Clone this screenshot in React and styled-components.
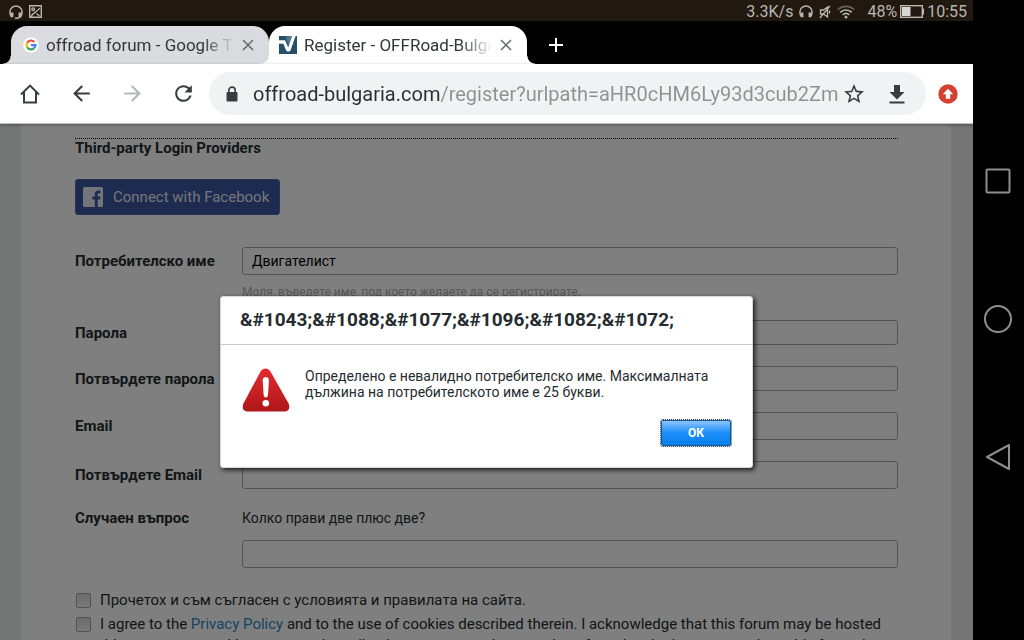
import React from 'react';
import styled, { createGlobalStyle, css } from 'styled-components';
import { MdArrowBack, MdArrowForward, MdRefresh, MdStarBorder } from 'react-icons/md';

const GlobalStyle = createGlobalStyle`
  *, *::before, *::after { box-sizing: border-box; }
  body { margin: 0; background: #000; }
  body, input, button { font-family: Roboto, "Noto Sans", sans-serif; }
`;

/* ---------- device ---------- */
const Device = styled.div`
  display: flex;
  height: 100vh;
  overflow: hidden;
  background: #000;
`;
const Screen = styled.div`
  flex: 1;
  min-width: 0;
  display: flex;
  flex-direction: column;
`;
const SystemNav = styled.nav`
  width: 51px;
  display: flex;
  flex-direction: column;
  align-items: center;
  justify-content: center;
  gap: 106px;
  padding: 0 1px 3px 0;
`;
const NavButton = styled.button`
  display: block;
  width: 32px;
  height: 32px;
  padding: 0;
  border: 0;
  background: none;
  svg { display: block; }
`;

/* ---------- status bar ---------- */
const StatusBar = styled.div`
  height: 21px;
  flex: none;
  display: flex;
  align-items: center;
  justify-content: space-between;
  padding: 2px 6px 0 9px;
  background: #21180f;
  color: #b9b5b1;
  font-size: 16px;
  line-height: 19px;
`;
const StatusGroup = styled.div`
  display: flex;
  align-items: center;
  gap: ${(p) => p.$gap}px;
  svg { display: block; }
`;
const Power = styled(StatusGroup)`
  margin-left: 6px;
`;

/* ---------- tabs ---------- */
const TabStrip = styled.div`
  flex: none;
  height: 43px;
  display: flex;
  align-items: flex-end;
  padding-left: 11px;
`;
const flare = css`
  content: "";
  position: absolute;
  bottom: 0;
  width: 8px;
  height: 8px;
`;
const Tab = styled.div`
  position: relative;
  width: 258px;
  height: 38px;
  display: flex;
  align-items: center;
  gap: 7px;
  padding: 0 14px 0 10px;
  border-radius: 16px 16px 0 0;
  background: ${(p) => (p.$active ? '#fff' : '#dadbdf')};
  color: #333639;
  &::before {
    ${flare}
    left: -8px;
    background: radial-gradient(circle at 0 0, transparent 7px, ${(p) => (p.$active ? '#fff' : '#dadbdf')} 8px);
  }
  &::after {
    ${flare}
    right: -8px;
    background: radial-gradient(circle at 100% 0, transparent 7px, ${(p) => (p.$active ? '#fff' : 'transparent')} 8px);
  }
  & > svg { flex: none; }
`;
const TabTitle = styled.span`
  flex: 1;
  min-width: 0;
  overflow: hidden;
  white-space: nowrap;
  font-size: 17px;
  line-height: 24px;
  mask-image: linear-gradient(to right, #000 calc(100% - 32px), transparent);
`;
const IconButton = styled.button`
  flex: none;
  display: flex;
  align-items: center;
  justify-content: center;
  width: 24px;
  height: 24px;
  padding: 0;
  border: 0;
  background: none;
  color: ${(p) => p.$color || '#3a3d40'};
  svg { display: block; flex: none; }
`;
const NewTab = styled(IconButton)`
  margin: 0 0 7px 17px;
`;
const CloseButton = styled(IconButton)`
  width: 14px;
`;

/* ---------- toolbar ---------- */
const Toolbar = styled.div`
  position: relative;
  z-index: 2;
  flex: none;
  height: 60px;
  display: flex;
  align-items: center;
  padding: 0 13px 0 18px;
  gap: 27px;
  background: #fff;
  border-bottom: 1px solid #c4c4c4;
  box-shadow: 0 1px 3px rgba(0, 0, 0, 0.35);
`;
const Omnibox = styled.div`
  flex: 1;
  min-width: 0;
  height: 43px;
  display: flex;
  align-items: center;
  gap: 13px;
  margin: 0 -17px 0 -13px;
  padding: 0 17px 0 15px;
  border-radius: 22px;
  background: #f1f2f4;
  color: #3a3d40;
  & > svg { flex: none; }
`;
const Address = styled.input`
  flex: 1;
  min-width: 0;
  padding: 0;
  border: 0;
  outline: 0;
  font-size: 20px;
  line-height: 28px;
  color: transparent;
  background: linear-gradient(to right, #2b2e31 187px, #8f9092 187px);
  background-clip: text;
  -webkit-background-clip: text;
`;
const OmniActions = styled.div`
  display: flex;
  gap: 19px;
  margin-left: -9px;
`;

/* ---------- page ---------- */
const Viewport = styled.main`
  position: relative;
  flex: 1;
  min-height: 0;
  overflow: hidden;
  padding: 0 22px 0 21px;
  background: #e8ebea;
`;
const Sheet = styled.form`
  min-height: 100%;
  padding: 14px 53px 0 54px;
  background: #fff;
  color: #252c2f;
  font-size: 15px;
`;
const Section = styled.section`
  border-top: 1px dotted #000;
  margin-bottom: 32px;
`;
const SectionTitle = styled.h2`
  margin: 0 0 22px;
  font-size: 15px;
  line-height: 18px;
  font-weight: 700;
`;
const FacebookButton = styled.button`
  display: flex;
  align-items: center;
  gap: 10px;
  height: 36px;
  padding: 0 10px 0 7px;
  border: 1px solid #5068ac;
  border-radius: 3px;
  background: #3a56a0;
  color: #e8ebf4;
  font-size: 15px;
  line-height: 20px;
  svg { display: block; }
`;
const Fields = styled.div`
  display: flex;
  flex-direction: column;
  gap: 21px;
`;
const FieldRow = styled.div`
  display: grid;
  grid-template-columns: 167px minmax(0, 1fr);
  align-items: center;
`;
const Label = styled.label`
  font-size: 15px;
  line-height: 16px;
  font-weight: 700;
  white-space: nowrap;
`;
const TextInput = styled.input`
  width: 100%;
  height: ${(p) => (p.type === 'password' ? 25 : 28)}px;
  padding: 0 9px;
  border: 1px solid #a8a8a8;
  border-radius: 3px;
  outline: 0;
  background: #fff;
  color: #000;
  font-size: 14px;
`;
const Hint = styled.p`
  grid-column: 2;
  margin: 10px 0 0;
  color: #adadad;
  font-size: 12px;
  line-height: 14px;
`;
const Question = styled.p`
  margin: 0;
  font-size: 14px;
  line-height: 16px;
`;
const Answer = styled.div`
  grid-column: 2;
  margin-top: 14px;
`;
const Consents = styled.div`
  display: flex;
  flex-direction: column;
  gap: 3px;
  margin-top: 22px;
`;
const Consent = styled.div`
  font-size: 15px;
  line-height: 21px;
  a { color: #2b86c5; text-decoration: none; }
`;
const Tick = styled.input`
  appearance: none;
  width: 15px;
  height: 15px;
  margin: 0 9px 0 1px;
  vertical-align: -3px;
  border: 1px solid #a4a4a4;
  border-radius: 2px;
  background: linear-gradient(#d8d8d8, #f4f4f4);
`;

/* ---------- dialog ---------- */
const Backdrop = styled.div`
  position: absolute;
  inset: 0;
  display: flex;
  align-items: center;
  justify-content: center;
  background: rgba(0, 0, 0, 0.5);
`;
const Dialog = styled.div`
  width: 533px;
  max-width: 90%;
  margin-bottom: 1px;
  border: 1px solid #d5d8da;
  border-radius: 3px;
  background: #fff;
  color: #252c2f;
  box-shadow: 2px 2px 5px rgba(0, 0, 0, 0.8);
`;
const DialogTitle = styled.h1`
  margin: 0;
  padding: 11px 19px 12px;
  border-bottom: 1px solid #c5cad2;
  font-size: 19px;
  line-height: 24px;
  font-weight: 700;
`;
const DialogBody = styled.div`
  display: flex;
  gap: 15px;
  padding: 23px 20px 0;
  svg { flex: none; display: block; }
`;
const Message = styled.p`
  margin: 0;
  font-size: 14px;
  line-height: 16px;
`;
const DialogActions = styled.div`
  display: flex;
  justify-content: flex-end;
  padding: 8px 21px 21px;
`;
const OkButton = styled.button`
  width: 70px;
  height: 26px;
  padding: 0;
  border: 1px solid #16558f;
  border-radius: 2px;
  outline: 1px dotted #16425f;
  background: linear-gradient(#8cc4fb, #1a8dfa 50%, #0a7fe8);
  color: #fff;
  font-size: 12px;
  line-height: 16px;
  font-weight: 700;
`;

/* ---------- drawings ---------- */
const Headset = ({ mic }) => (
  <svg width="14" height="14" viewBox="0 0 14 14" fill="none" stroke="currentColor">
    <path d="M2.400 11.700C1.200 10 .9 8.600 .9 7a6.100 6.100 0 0 1 12.200 0c0 1.600-.3 3-1.500 4.700" strokeWidth="1.500" />
    <path d="M3.200 7.600v4.600M10.800 7.600v4.600" strokeWidth="2.400" />
    {mic && <path d="M11.500 12L8 13.200H6" strokeWidth="1.400" />}
  </svg>
);
const Picture = () => (
  <svg width="13" height="13" viewBox="0 0 13 13" fill="none" stroke="currentColor" strokeWidth="1.400">
    <path d="M.7 .7h11.600v11.600H.7zM2.200 11.500C4 7 8 7.500 10.800 3M7.500 8.500l3 2.500" />
    <circle cx="4.200" cy="4.200" r="1.300" />
  </svg>
);
const Muted = () => (
  <svg width="12" height="14" viewBox="0 0 12 14" fill="none" stroke="currentColor" strokeWidth="1.300">
    <path d="M1.500 5h3L8.500 2v10L4.500 9h-3zM.8 13L11 1M10.500 5.500v3" />
  </svg>
);
const Wifi = () => (
  <svg width="18" height="14" viewBox="0 0 18 14" fill="none" stroke="currentColor" strokeWidth="1.700">
    <path d="M.8 4.600a12 12 0 0 1 16.400 0" opacity=".45" />
    <path d="M3.200 7.300a8.500 8.500 0 0 1 11.600 0M5.700 9.900a5 5 0 0 1 6.600 0" />
    <circle cx="9" cy="12.200" r="1.400" fill="currentColor" stroke="none" />
  </svg>
);
const Battery = () => (
  <svg width="24" height="13" viewBox="0 0 24 13">
    <rect x=".7" y=".7" width="21.600" height="11.600" fill="none" stroke="currentColor" strokeWidth="1.400" />
    <path d="M2 2h8.500v9H2z" fill="#d8d5d2" />
    <path d="M22.500 3.500H24v6h-1.500z" fill="currentColor" />
  </svg>
);
const GoogleMark = () => (
  <svg width="18" height="18" viewBox="-2 -1 18 18" fill="none" strokeWidth="2.200">
    <circle cx="8" cy="8" r="7.800" fill="#fff" />
    <path d="M11.300 4.900A4.500 4.500 0 0 0 4.100 5.800" stroke="#ea4335" />
    <path d="M4.100 5.800a4.500 4.500 0 0 0 0 4.400" stroke="#fbbc05" />
    <path d="M4.100 10.200a4.500 4.500 0 0 0 6.800 1.200" stroke="#34a853" />
    <path d="M10.900 11.400A4.500 4.500 0 0 0 12.500 8.200H8" stroke="#4285f4" />
  </svg>
);
const ForumMark = () => (
  <svg width="18" height="18" viewBox="0 0 18 18">
    <path d="M0 0h18v18H0z" fill="#245069" />
    <path d="M0 4.300h5.200q1 0 1.400 1L9.200 11.500 13 0h3.600l-5 14.200q-.5 1.300-1.700 1.300H8.700q-1.100 0-1.600-1.200L4.300 7.800H0z" fill="#fff" />
    <path d="M7 0h6L9.700 9.500 7.500 3.800z" fill="#dde6ea" opacity=".25" />
  </svg>
);
const Close = () => (
  <svg width="12" height="12" viewBox="0 0 12 12" stroke="#65686b" strokeWidth="1.500">
    <path d="M1 1l10 10M11 1L1 11" />
  </svg>
);
const Plus = () => (
  <svg width="16" height="16" viewBox="0 0 16 16" stroke="#fff" strokeWidth="2">
    <path d="M8 1v14M1 8h14" />
  </svg>
);
const Home = () => (
  <svg width="20" height="20" viewBox="0 0 20 20" fill="none" stroke="currentColor" strokeWidth="2">
    <path d="M1 10.500L10 1.600l9 8.900M4 8v10.500h12V8" />
  </svg>
);
const Lock = () => (
  <svg width="16" height="16" viewBox="0 0 16 16" fill="none" stroke="currentColor">
    <path d="M4.800 7V4.300a3.200 3.200 0 0 1 6.400 0V7" strokeWidth="1.600" />
    <rect x="2.500" y="6" width="11" height="9.500" rx="1" fill="currentColor" stroke="none" />
  </svg>
);
const Download = () => (
  <svg width="24" height="24" viewBox="0 0 24 24" fill="currentColor">
    <path d="M19.500 10H15V3H9v7H4.500l7.500 7.500zM4.500 19.500v2h15v-2z" />
  </svg>
);
const Update = () => (
  <svg width="20" height="20" viewBox="0 0 20 20">
    <circle cx="10" cy="10" r="9.700" fill="#d5402f" />
    <path d="M10 4.800l5.200 5.400h-3v4.600H7.800v-4.600h-3z" fill="#fff" />
  </svg>
);
const FacebookMark = () => (
  <svg width="20" height="20" viewBox="0 0 20 20">
    <rect width="20" height="20" rx="1.500" fill="#e8ebf4" />
    <path d="M11.800 20v-7.500H9.300V9.600h2.500V7.400c0-2.500 1.500-3.900 3.800-3.900.9 0 1.500.1 1.900.1v2.600h-1.400c-1.200 0-1.400.6-1.400 1.500v1.900h2.800l-.4 2.900h-2.400V20z" fill="#3a56a0" />
  </svg>
);
const Warning = () => (
  <svg width="49" height="44" viewBox="0 0 49 44">
    <defs>
      <linearGradient id="warn" x1="0" y1="0" x2="0" y2="1">
        <stop offset="0" stopColor="#e62a2e" />
        <stop offset="1" stopColor="#ad1719" />
      </linearGradient>
    </defs>
    <path d="M20 2.800Q24.500-1.800 29 2.800L47.600 35.500Q50 42.500 44 43.500H6Q0 42.500 2.400 35.500z" fill="url(#warn)" />
    <path d="M21.700 12.500q0-3.500 3.100-3.500t3.100 3.500l-.9 14q-.3 3-2.200 3t-2.200-3z" fill="#fff" />
    <circle cx="24.800" cy="35.300" r="3.300" fill="#fff" />
  </svg>
);

const FIELDS = [
  { id: 'username', label: 'Потребителско име', value: 'Двигателист', hint: 'Моля, въведете име, под което желаете да се регистрирате.' },
  { id: 'password', label: 'Парола', type: 'password' },
  { id: 'password2', label: 'Потвърдете парола', type: 'password' },
  { id: 'email', label: 'Email' },
  { id: 'email2', label: 'Потвърдете Email' },
  { id: 'answer', label: 'Случаен въпрос', question: 'Колко прави две плюс две?' },
];

function Field({ id, label, type = 'text', value = '', hint, question }) {
  const input = <TextInput id={id} type={type} defaultValue={value} />;
  return (
    <FieldRow>
      <Label htmlFor={id}>{label}</Label>
      {question ? (
        <>
          <Question>{question}</Question>
          <Answer>{input}</Answer>
        </>
      ) : input}
      {hint && <Hint>{hint}</Hint>}
    </FieldRow>
  );
}

export default function App() {
  return (
    <Device>
      <GlobalStyle />
      <Screen>
        <StatusBar>
          <StatusGroup $gap={6}><Headset mic /><Picture /></StatusGroup>
          <StatusGroup $gap={6}>
            <span>3.3K/s</span>
            <Headset />
            <Muted />
            <Wifi />
            <Power $gap={3}><span>48%</span><Battery /><span>10:55</span></Power>
          </StatusGroup>
        </StatusBar>
        <TabStrip>
          <Tab>
            <GoogleMark />
            <TabTitle>offroad forum - Google Търсене</TabTitle>
            <CloseButton aria-label="Close tab"><Close /></CloseButton>
          </Tab>
          <Tab $active>
            <ForumMark />
            <TabTitle>Register - OFFRoad-Bulgaria.com</TabTitle>
            <CloseButton aria-label="Close tab"><Close /></CloseButton>
          </Tab>
          <NewTab aria-label="New tab"><Plus /></NewTab>
        </TabStrip>
        <Toolbar>
          <IconButton aria-label="Home"><Home /></IconButton>
          <IconButton aria-label="Back"><MdArrowBack size={25} /></IconButton>
          <IconButton aria-label="Forward" $color="#b6b7b8"><MdArrowForward size={25} /></IconButton>
          <IconButton aria-label="Reload"><MdRefresh size={25} /></IconButton>
          <Omnibox>
            <Lock />
            <Address aria-label="Address" defaultValue="offroad-bulgaria.com/register?urlpath=aHR0cHM6Ly93d3cub2Zm" />
            <OmniActions>
              <IconButton aria-label="Bookmark"><MdStarBorder size={24} /></IconButton>
              <IconButton aria-label="Download"><Download /></IconButton>
            </OmniActions>
          </Omnibox>
          <IconButton aria-label="Update available"><Update /></IconButton>
        </Toolbar>
        <Viewport>
          <Sheet>
            <Section>
              <SectionTitle>Third-party Login Providers</SectionTitle>
              <FacebookButton type="button"><FacebookMark />Connect with Facebook</FacebookButton>
            </Section>
            <Fields>
              {FIELDS.map((f) => <Field key={f.id} {...f} />)}
            </Fields>
            <Consents>
              <Consent>
                <Tick type="checkbox" id="rules" />
                <label htmlFor="rules">Прочетох и съм съгласен с условията и правилата на сайта.</label>
              </Consent>
              <Consent>
                <Tick type="checkbox" id="privacy" />
                <label htmlFor="privacy">
                  I agree to the <a href="#privacy">Privacy Policy</a> and to the use of cookies described therein. I acknowledge that this forum may be hosted outside my country and I consent to the collection, storage, and processing of my data in the country where this forum is hosted.
                </label>
              </Consent>
            </Consents>
          </Sheet>
          <Backdrop>
            <Dialog role="alertdialog" aria-modal="true" aria-labelledby="dialog-title">
              <DialogTitle id="dialog-title">{'&#1043;&#1088;&#1077;&#1096;&#1082;&#1072;'}</DialogTitle>
              <DialogBody>
                <Warning />
                <Message>Определено е невалидно потребителско име. Максималната дължина на потребителското име е 25 букви.</Message>
              </DialogBody>
              <DialogActions><OkButton type="button">ОК</OkButton></DialogActions>
            </Dialog>
          </Backdrop>
        </Viewport>
      </Screen>
      <SystemNav>
        <NavButton aria-label="Recent apps">
          <svg width="32" height="32" viewBox="0 0 32 32" fill="none" stroke="#8e8e8e" strokeWidth="2">
            <rect x="4.500" y="4.500" width="23" height="23" rx="1" />
          </svg>
        </NavButton>
        <NavButton aria-label="Home screen">
          <svg width="32" height="32" viewBox="0 0 32 32" fill="none" stroke="#8e8e8e" strokeWidth="2">
            <circle cx="16" cy="16" r="13" />
          </svg>
        </NavButton>
        <NavButton aria-label="Back to previous screen">
          <svg width="32" height="32" viewBox="0 0 32 32" fill="none" stroke="#8e8e8e" strokeWidth="2" strokeLinejoin="round">
            <path d="M5 16L27 4v24z" />
          </svg>
        </NavButton>
      </SystemNav>
    </Device>
  );
}
